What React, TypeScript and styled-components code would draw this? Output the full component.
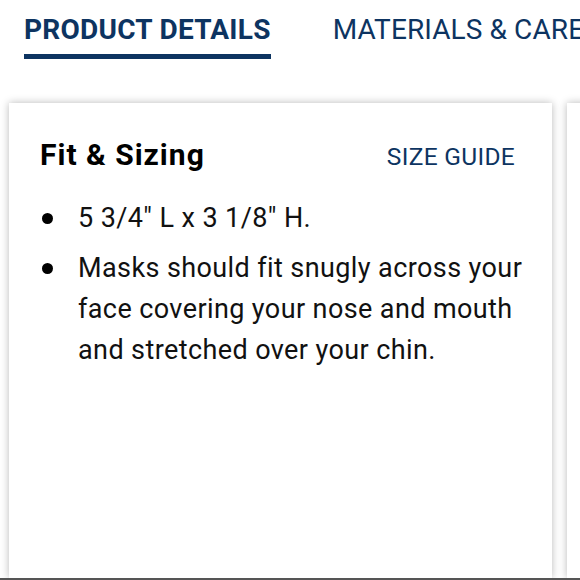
import React from "react";
import styled, { createGlobalStyle } from "styled-components";

const Global = createGlobalStyle`
  html, body { margin: 0; padding: 0; background: #fff; }
  body { font-family: Roboto, "Liberation Sans", sans-serif; }
`;

const Page = styled.div`
  width: 580px;
  height: 580px;
  overflow: hidden;
  display: flex;
  flex-direction: column;
  border-bottom: 2px solid #555;
  box-sizing: border-box;
`;

const Tabs = styled.div`
  display: flex;
  gap: 62px;
  padding: 14px 0 0 24px;
  white-space: nowrap;
`;

const Tab = styled.div<{ $active?: boolean }>`
  font-size: 28px;
  letter-spacing: ${(p) => (p.$active ? "0.25px" : "0.1px")};
  font-weight: ${(p) => (p.$active ? 700 : 400)};
  color: #0d3461;
  padding-bottom: 8px;
  border-bottom: 5px solid ${(p) => (p.$active ? "#0d3461" : "transparent")};
  line-height: 32px;
`;

const Cards = styled.div`
  display: flex;
  gap: 15px;
  padding: 44px 0 0 9px;
  flex: 1;
`;

const Card = styled.div`
  flex: 0 0 543px;
  background: #fff;
  box-shadow: 0 0 8px rgba(0, 0, 0, 0.28);
  padding: 34px 20px 0 31px;
  box-sizing: border-box;
`;

const Header = styled.div`
  display: flex;
  justify-content: space-between;
  align-items: baseline;
  padding-right: 17px;
`;

const Title = styled.h2`
  margin: 0;
  font-size: 30px;
  letter-spacing: 1px;
  font-weight: 700;
  color: #000;
`;

const Guide = styled.a`
  font-size: 24.5px;
  letter-spacing: 0.3px;
  color: #0d3461;
  text-decoration: none;
`;

const List = styled.ul`
  margin: 26px 0 0;
  padding: 0 0 0 38px;
  list-style: none;
  font-size: 27px;
  letter-spacing: 0.4px;
  line-height: 41px;
  color: #111;
`;

const Item = styled.li`
  position: relative;
  margin-bottom: 9px;
  &::before {
    content: "";
    position: absolute;
    left: -36px;
    top: 15px;
    width: 11px;
    height: 11px;
    border-radius: 50%;
    background: #000;
  }
`;

export default function App() {
  return (
    <Page>
      <Global />
      <Tabs>
        <Tab $active>PRODUCT DETAILS</Tab>
        <Tab>MATERIALS &amp; CARE</Tab>
      </Tabs>
      <Cards>
        <Card>
          <Header>
            <Title>Fit &amp; Sizing</Title>
            <Guide href="#">SIZE GUIDE</Guide>
          </Header>
          <List>
            <Item>5 3/4" L x 3 1/8" H.</Item>
            <Item>
              Masks should fit snugly across your face covering your nose and
              mouth and stretched over your chin.
            </Item>
          </List>
        </Card>
        <Card />
      </Cards>
    </Page>
  );
}
